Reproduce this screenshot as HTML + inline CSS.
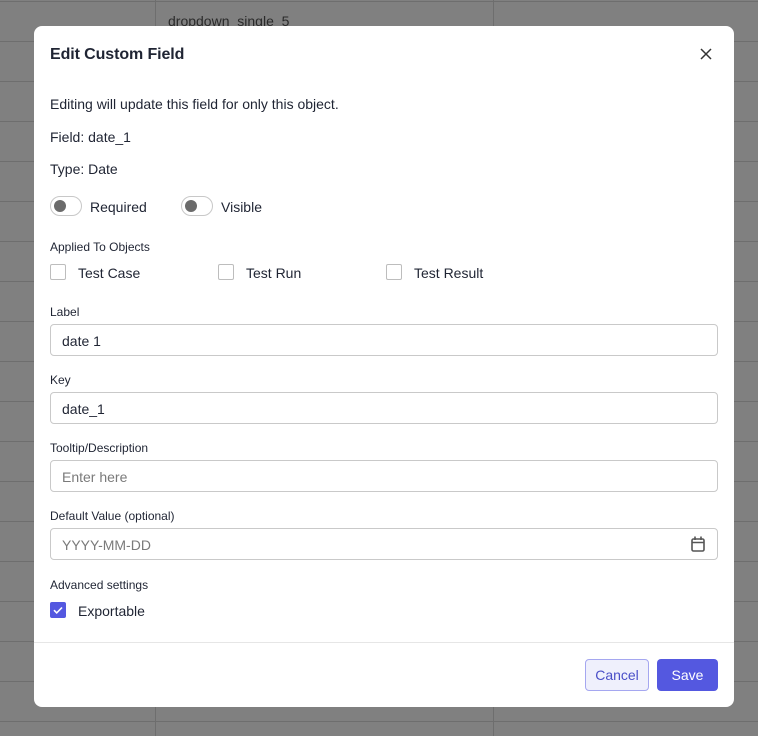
<!DOCTYPE html>
<html><head><style>
*{box-sizing:border-box;margin:0;padding:0}
body{width:758px;height:736px;overflow:hidden;font-family:"Liberation Sans",sans-serif;color:#1f2433;position:relative;
background-color:#808080;
background-image:linear-gradient(#6e6e6e 1px,transparent 1px);background-size:100% 40px;background-position:0 1px}
.vl{position:absolute;top:0;bottom:0;width:1px;background:#6e6e6e}
.bgt{position:absolute;left:168px;top:13px;font-size:14px;color:#2a2a2a}
.modal{position:absolute;left:34px;top:26px;width:700px;height:681px;background:#fff;border-radius:8px}
.abs{position:absolute}
.t{font-size:14px;color:#1f2433}
.lbl{font-size:12px;color:#1f2433}
.inp{position:absolute;left:16px;width:668px;height:32px;border:1px solid #c9c9c9;border-radius:4px;font-size:14px;padding:7px 11px}
.tog{position:absolute;width:32px;height:20px;border:1px solid #c8c8c8;border-radius:10px}
.tog:after{content:"";position:absolute;left:3px;top:3px;width:12px;height:12px;border-radius:50%;background:#6b6b6b}
.cb{position:absolute;width:16px;height:16px;border:1px solid #bdbdbd;border-radius:2px}
</style></head><body>
<div class="vl" style="left:155px"></div><div class="vl" style="left:493px"></div>
<div class="bgt">dropdown_single_5</div>
<div class="modal">
<div class="abs" style="left:16px;top:20px;font-size:16px;font-weight:bold;letter-spacing:-0.1px">Edit Custom Field</div>
<svg class="abs" style="left:666px;top:22px" width="12" height="12" viewBox="0 0 12 12"><path d="M1 1L11 11M11 1L1 11" stroke="#333" stroke-width="1.5"/></svg>
<div class="abs t" style="left:16px;top:70px">Editing will update this field for only this object.</div>
<div class="abs t" style="left:16px;top:103px">Field: date_1</div>
<div class="abs t" style="left:16px;top:135px">Type: Date</div>
<div class="tog" style="left:16px;top:170px"></div><div class="abs t" style="left:56px;top:173px">Required</div>
<div class="tog" style="left:147px;top:170px"></div><div class="abs t" style="left:187px;top:173px">Visible</div>
<div class="abs lbl" style="left:16px;top:214px">Applied To Objects</div>
<div class="cb" style="left:16px;top:238px"></div><div class="abs t" style="left:44px;top:239px">Test Case</div>
<div class="cb" style="left:184px;top:238px"></div><div class="abs t" style="left:212px;top:239px">Test Run</div>
<div class="cb" style="left:352px;top:238px"></div><div class="abs t" style="left:380px;top:239px">Test Result</div>
<div class="abs lbl" style="left:16px;top:279px">Label</div>
<div class="inp" style="top:298px;padding-top:8px">date 1</div>
<div class="abs lbl" style="left:16px;top:347px">Key</div>
<div class="inp" style="top:366px;padding-top:8px">date_1</div>
<div class="abs lbl" style="left:16px;top:415px">Tooltip/Description</div>
<div class="inp" style="top:434px;padding-top:8px;color:#7a7a7a">Enter here</div>
<div class="abs lbl" style="left:16px;top:483px">Default Value (optional)</div>
<div class="inp" style="top:502px;padding-top:8px;color:#7a7a7a">YYYY-MM-DD</div>
<svg class="abs" style="left:657px;top:510px" width="14" height="16" viewBox="0 0 14 16"><rect x="1" y="3" width="12" height="12" rx="1.5" fill="none" stroke="#555" stroke-width="1.6"/><path d="M1 6.5h12M4 0.5v3.5M10 0.5v3.5" stroke="#555" stroke-width="1.6"/></svg>
<div class="abs lbl" style="left:16px;top:552px">Advanced settings</div>
<div class="cb" style="left:16px;top:576px;background:#5458e0;border-color:#5458e0"><svg width="14" height="14" viewBox="0 0 14 14" style="position:absolute;left:0;top:0"><path d="M3 7.2l2.7 2.7L11 4.5" stroke="#fff" stroke-width="1.6" fill="none"/></svg></div>
<div class="abs t" style="left:44px;top:577px">Exportable</div>
<div class="abs" style="left:0;right:0;top:616px;height:1px;background:#e6e6e6"></div>
<div class="abs" style="left:551px;top:633px;width:64px;height:32px;border:1px solid #a5a7f0;background:#eff0fc;border-radius:4px;color:#4a4fc8;font-size:14px;text-align:center;line-height:30px">Cancel</div>
<div class="abs" style="left:623px;top:633px;width:61px;height:32px;background:#5458e0;border-radius:4px;color:#fff;font-size:14px;text-align:center;line-height:32px">Save</div>
</div>
</body></html>
